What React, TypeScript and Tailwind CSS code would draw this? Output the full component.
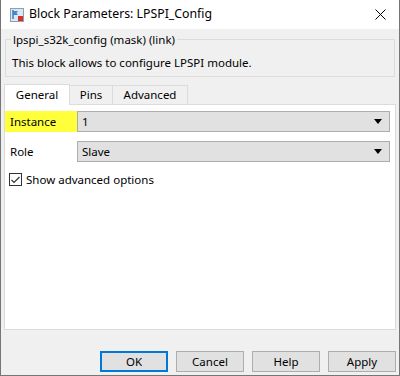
import { useState } from 'react'

const font = { fontFamily: '"Segoe UI", "Noto Sans", sans-serif' }

function BlockIcon() {
  return (
    <svg width="14" height="14" viewBox="0 0 14 14" className="shrink-0">
      <rect x="0.5" y="0.5" width="13" height="13" fill="#dce6f0" stroke="#8aa0b8" />
      <path d="M3 2v9" stroke="#1f5fa8" strokeWidth="1.2" />
      <path d="M3 3h5l-1.5 2L8 7H3z" fill="#3a8ad6" />
      <rect x="8" y="8" width="5" height="5" fill="#d9341f" />
    </svg>
  )
}

function Dropdown({ value }: { value: string }) {
  return (
    <div className="flex h-[21px] flex-1 items-center border border-[#adadad] bg-[#e1e1e1] pl-[4px] pr-[7px]">
      <span className="flex-1 text-black">{value}</span>
      <svg width="8" height="5" viewBox="0 0 8 5">
        <path d="M0 0h8L4 5z" fill="#000" />
      </svg>
    </div>
  )
}

function Btn({ label, primary }: { label: string; primary?: boolean }) {
  return (
    <button
      className={
        'h-[21px] w-[68px] bg-[#e1e1e1] text-black ' +
        (primary ? 'border-2 border-[#0078d7]' : 'border border-[#adadad]')
      }
    >
      {label}
    </button>
  )
}

export default function App() {
  const [tab, setTab] = useState('General')
  const [adv, setAdv] = useState(true)
  const tabs = [
    { name: 'General', w: 'w-[66px]' },
    { name: 'Pins', w: 'w-[43px]' },
    { name: 'Advanced', w: 'w-[75px]' },
  ]

  return (
    <div style={font} className="flex h-[376px] w-[400px] flex-col overflow-hidden border-x border-b border-[#767676] bg-[#f0f0f0] text-[11.5px] text-black">
      <div className="flex h-[29px] shrink-0 items-center bg-white pl-[9px] pr-[13px] text-[12.3px]">
        <BlockIcon />
        <span className="ml-[5px] flex-1">Block Parameters: LPSPI_Config</span>
        <svg width="11" height="11" viewBox="0 0 11 11">
          <path d="M0.5 0.5l10 10M10.5 0.5l-10 10" stroke="#000" strokeWidth="1" />
        </svg>
      </div>

      <div className="relative mx-[4px] mt-[10px] h-[38px] border border-[#dcdcdc] px-[6px] pt-[14px]">
        <span className="absolute -top-[9px] left-[5px] bg-[#f0f0f0] px-[2px]">
          lpspi_s32k_config (mask) (link)
        </span>
        <p>This block allows to configure LPSPI module.</p>
      </div>

      <div className="mx-[3px] mt-[7px] flex h-[20px] items-end">
        {tabs.map((t) =>
          t.name === tab ? (
            <button
              key={t.name}
              onClick={() => setTab(t.name)}
              className={'relative z-10 -mb-px h-[21px] border border-b-0 border-[#dcdcdc] bg-white ' + t.w}
            >
              {t.name}
            </button>
          ) : (
            <button
              key={t.name}
              onClick={() => setTab(t.name)}
              className={'h-[19px] border border-b-0 border-l-0 border-[#dcdcdc] bg-[#f0f0f0] ' + t.w}
            >
              {t.name}
            </button>
          ),
        )}
      </div>

      <div className="mx-[3px] flex h-[226px] flex-col border border-[#dcdcdc] bg-white pt-[6px] pr-[5px]">
        <div className="flex items-center">
          <div className="flex h-[21px] w-[72px] items-center bg-[#ffff3c] pl-[5px]">Instance</div>
          <Dropdown value="1" />
        </div>
        <div className="mt-[9px] flex items-center">
          <div className="w-[72px] pl-[5px]">Role</div>
          <Dropdown value="Slave" />
        </div>
        <label className="mt-[9px] flex items-center pl-[4px]">
          <span
            onClick={() => setAdv(!adv)}
            className="flex h-[13px] w-[13px] items-center justify-center border border-[#333] bg-white"
          >
            {adv && (
              <svg width="9" height="8" viewBox="0 0 9 8">
                <path d="M0.5 4l2.5 2.5L8.5 1" stroke="#333" strokeWidth="1.2" fill="none" />
              </svg>
            )}
          </span>
          <span className="ml-[4px]">Show advanced options</span>
        </label>
      </div>

      <div className="mt-[21px] flex justify-end gap-[8px] pr-[3px]">
        <Btn label="OK" primary />
        <Btn label="Cancel" />
        <Btn label="Help" />
        <Btn label="Apply" />
      </div>
    </div>
  )
}
